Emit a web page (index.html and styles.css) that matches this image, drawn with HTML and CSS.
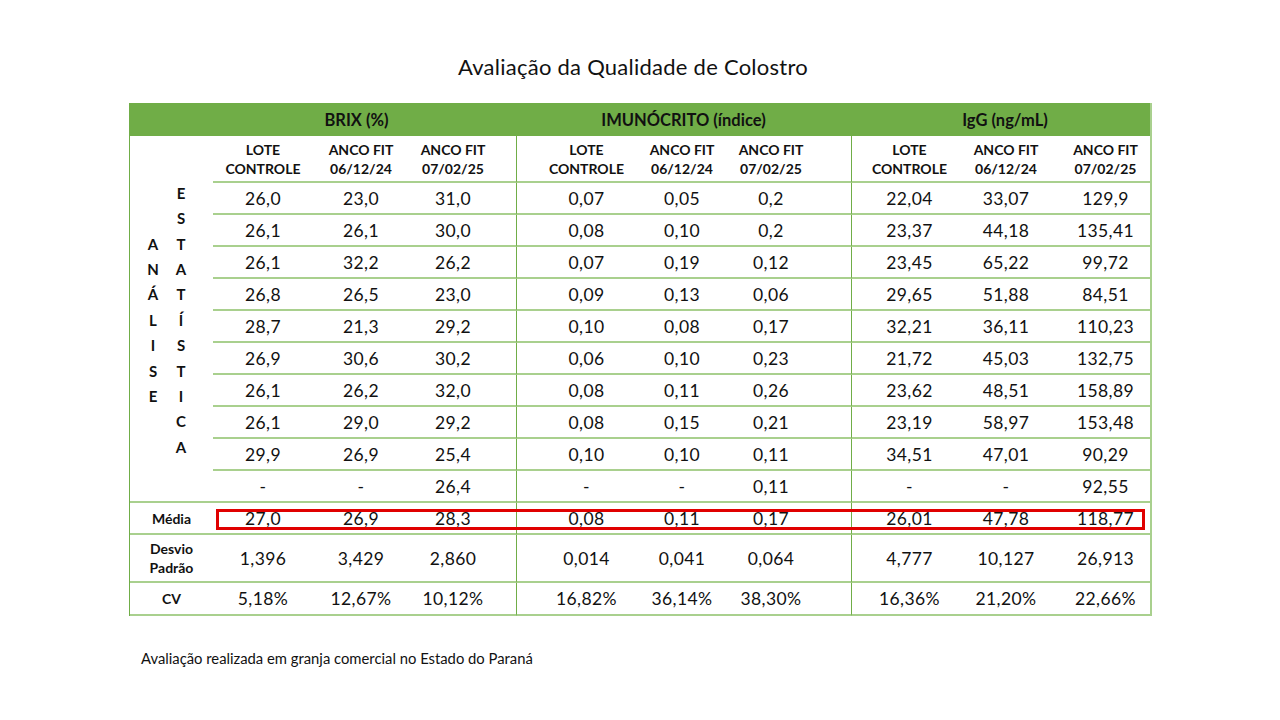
FILE: index.html
```html
<!DOCTYPE html>
<html lang="pt-BR">
<head>
<meta charset="utf-8">
<title>Avaliação da Qualidade de Colostro</title>
<link rel="stylesheet" href="styles.css">
</head>
<body>
<main class="slide">
  <h1 class="title">Avaliação da Qualidade de Colostro</h1>
  <div class="table-wrap">
    <div class="grid">
      <div class="hd"></div>
      <div class="hd span3 hd-brix">BRIX (%)</div>
      <div class="hd span3">IMUNÓCRITO (índice)</div>
      <div class="hd span3 hd-igg">IgG (ng/mL)</div>

      <div class="label-cell">
        <div class="vword"><span>A</span><span>N</span><span>Á</span><span>L</span><span>I</span><span>S</span><span>E</span></div>
        <div class="vword"><span>E</span><span>S</span><span>T</span><span>A</span><span>T</span><span>Í</span><span>S</span><span>T</span><span>I</span><span>C</span><span>A</span></div>
      </div>

      <div class="c sub">LOTE<br>CONTROLE</div>
      <div class="c sub">ANCO FIT<br>06/12/24</div>
      <div class="c sub b3">ANCO FIT<br>07/02/25</div>
      <div class="c sub i1">LOTE<br>CONTROLE</div>
      <div class="c sub">ANCO FIT<br>06/12/24</div>
      <div class="c sub i3">ANCO FIT<br>07/02/25</div>
      <div class="c sub g1">LOTE<br>CONTROLE</div>
      <div class="c sub">ANCO FIT<br>06/12/24</div>
      <div class="c sub g3">ANCO FIT<br>07/02/25</div>

      <div class="c">26,0</div><div class="c">23,0</div><div class="c b3">31,0</div>
      <div class="c i1">0,07</div><div class="c">0,05</div><div class="c i3">0,2</div>
      <div class="c g1">22,04</div><div class="c">33,07</div><div class="c g3">129,9</div>

      <div class="c">26,1</div><div class="c">26,1</div><div class="c b3">30,0</div>
      <div class="c i1">0,08</div><div class="c">0,10</div><div class="c i3">0,2</div>
      <div class="c g1">23,37</div><div class="c">44,18</div><div class="c g3">135,41</div>

      <div class="c">26,1</div><div class="c">32,2</div><div class="c b3">26,2</div>
      <div class="c i1">0,07</div><div class="c">0,19</div><div class="c i3">0,12</div>
      <div class="c g1">23,45</div><div class="c">65,22</div><div class="c g3">99,72</div>

      <div class="c">26,8</div><div class="c">26,5</div><div class="c b3">23,0</div>
      <div class="c i1">0,09</div><div class="c">0,13</div><div class="c i3">0,06</div>
      <div class="c g1">29,65</div><div class="c">51,88</div><div class="c g3">84,51</div>

      <div class="c">28,7</div><div class="c">21,3</div><div class="c b3">29,2</div>
      <div class="c i1">0,10</div><div class="c">0,08</div><div class="c i3">0,17</div>
      <div class="c g1">32,21</div><div class="c">36,11</div><div class="c g3">110,23</div>

      <div class="c">26,9</div><div class="c">30,6</div><div class="c b3">30,2</div>
      <div class="c i1">0,06</div><div class="c">0,10</div><div class="c i3">0,23</div>
      <div class="c g1">21,72</div><div class="c">45,03</div><div class="c g3">132,75</div>

      <div class="c">26,1</div><div class="c">26,2</div><div class="c b3">32,0</div>
      <div class="c i1">0,08</div><div class="c">0,11</div><div class="c i3">0,26</div>
      <div class="c g1">23,62</div><div class="c">48,51</div><div class="c g3">158,89</div>

      <div class="c">26,1</div><div class="c">29,0</div><div class="c b3">29,2</div>
      <div class="c i1">0,08</div><div class="c">0,15</div><div class="c i3">0,21</div>
      <div class="c g1">23,19</div><div class="c">58,97</div><div class="c g3">153,48</div>

      <div class="c">29,9</div><div class="c">26,9</div><div class="c b3">25,4</div>
      <div class="c i1">0,10</div><div class="c">0,10</div><div class="c i3">0,11</div>
      <div class="c g1">34,51</div><div class="c">47,01</div><div class="c g3">90,29</div>

      <div class="c">-</div><div class="c">-</div><div class="c b3">26,4</div>
      <div class="c i1">-</div><div class="c">-</div><div class="c i3">0,11</div>
      <div class="c g1">-</div><div class="c">-</div><div class="c g3">92,55</div>

      <div class="c rlabel">Média</div>
      <div class="c">27,0</div><div class="c">26,9</div><div class="c b3">28,3</div>
      <div class="c i1">0,08</div><div class="c">0,11</div><div class="c i3">0,17</div>
      <div class="c g1">26,01</div><div class="c">47,78</div><div class="c g3">118,77</div>

      <div class="c rlabel">Desvio<br>Padrão</div>
      <div class="c">1,396</div><div class="c">3,429</div><div class="c b3">2,860</div>
      <div class="c i1">0,014</div><div class="c">0,041</div><div class="c i3">0,064</div>
      <div class="c g1">4,777</div><div class="c">10,127</div><div class="c g3">26,913</div>

      <div class="c rlabel">CV</div>
      <div class="c">5,18%</div><div class="c">12,67%</div><div class="c b3">10,12%</div>
      <div class="c i1">16,82%</div><div class="c">36,14%</div><div class="c i3">38,30%</div>
      <div class="c g1">16,36%</div><div class="c">21,20%</div><div class="c g3">22,66%</div>
    </div>
    <div class="highlight"></div>
  </div>
  <p class="note">Avaliação realizada em granja comercial no Estado do Paraná</p>
</main>
</body>
</html>
```

FILE: styles.css
```css
html, body {
  margin: 0;
  padding: 0;
  background: #ffffff;
}

.slide {
  width: 1280px;
  height: 720px;
  box-sizing: border-box;
  padding-left: 129px;
  font-family: Lato, "Open Sans", "Liberation Sans", sans-serif;
  color: #111111;
  overflow: hidden;
}

.title {
  margin: 0 0 0 -129px;
  width: 1266px;
  height: 103px;
  box-sizing: border-box;
  padding-top: 52px;
  font-size: 22px;
  letter-spacing: 0.25px;
  line-height: 30px;
  font-weight: 400;
  text-align: center;
  color: #111111;
}

.table-wrap {
  position: relative;
  width: 1020px;
  border-left: 1px solid #70ad47;
  border-right: 2px solid #a9d08e;
}

.grid {
  display: grid;
  grid-template-columns: 83px 100px 96px 107px 118px 96px 121px 106px 98px 95px;
  grid-template-rows: 33px 47px repeat(10, 32px) 32px 48px 33px;
}

.hd {
  background: #70ad47;
  display: flex;
  align-items: center;
  justify-content: center;
  font-size: 16.5px;
  font-weight: 700;
  color: #111111;
}

.span3 {
  grid-column: span 3;
}

.hd-brix {
  padding-right: 16px;
}

.hd-igg {
  padding-left: 9px;
}

.label-cell {
  grid-row: span 11;
  border-bottom: 2px solid #a9d08e;
  display: flex;
  align-items: center;
  justify-content: center;
  gap: 14px;
  padding-right: 9px;
  padding-top: 4px;
}

.vword {
  display: flex;
  flex-direction: column;
  align-items: center;
  width: 14px;
  font-size: 15px;
  font-weight: 700;
  line-height: 25.4px;
}

.c {
  box-sizing: border-box;
  border-bottom: 2px solid #a9d08e;
  display: flex;
  align-items: center;
  justify-content: center;
  text-align: center;
  font-size: 17.5px;
  letter-spacing: 0.4px;
  white-space: nowrap;
}

.sub {
  font-size: 14px;
  font-weight: 700;
  line-height: 19px;
  letter-spacing: 0;
}

.rlabel {
  font-size: 14px;
  font-weight: 700;
  line-height: 19px;
  letter-spacing: 0;
}

.b3 {
  padding-right: 19px;
}

.i1 {
  border-left: 1px solid #70ad47;
  padding-left: 22px;
}

.i3 {
  padding-right: 39px;
}

.g1 {
  border-left: 1px solid #70ad47;
  padding-left: 10px;
}

.g3 {
  padding-left: 6px;
}

.highlight {
  position: absolute;
  left: 86px;
  top: 406px;
  width: 929px;
  height: 21px;
  box-sizing: border-box;
  border: 3px solid #e00000;
  pointer-events: none;
}

.note {
  margin: 33px 0 0 12px;
  font-size: 14.8px;
  line-height: 18px;
  color: #111111;
}
```
